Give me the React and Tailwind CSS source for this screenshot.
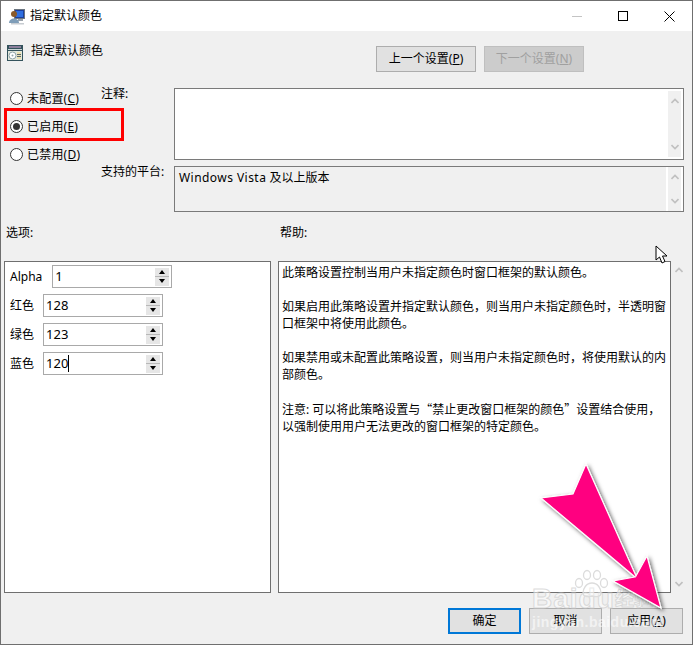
const FONT = { fontFamily: '"Noto Sans", "Noto Sans CJK SC", sans-serif' };

const Underlined = ({ label, k }) => (
  <>
    {label}(<span className="underline">{k}</span>)
  </>
);

const Radio = ({ checked, children }) => (
  <div className="flex items-center h-[28px] pl-[9px] gap-[4px]">
    <span className="w-[13px] h-[13px] rounded-full border border-[#333] bg-white flex items-center justify-center">
      {checked && <span className="w-[7px] h-[7px] rounded-full bg-[#333]" />}
    </span>
    <span className="leading-none pt-px tracking-[0.2px]">{children}</span>
  </div>
);

const Chevron = ({ up }) => (
  <svg width="8" height="6" viewBox="0 0 8 6">
    <path d={up ? "M0.5 5 L4 1.5 L7.5 5" : "M0.5 1 L4 4.5 L7.5 1"} fill="none" stroke="#c0c0c0" strokeWidth="1.6" />
  </svg>
);

const ScrollCol = ({ framed }) => (
  <div className={`w-[17px] flex flex-col items-center justify-between py-[7px] ${framed ? "bg-[#f0f0f0] border-x-2 border-white" : "bg-[#f0f0f0] border-2 border-white"}`}>
    <Chevron up />
    <Chevron />
  </div>
);

const Spin = ({ value, caret }) => (
  <div className="w-[120px] h-[23px] border border-[#a9a9a9] bg-white flex items-center">
    <span className="pl-[2px] flex-1 text-[13px] leading-none flex items-center">
      {value}
      {caret && <span className="w-px h-[17px] bg-black" />}
    </span>
    <div className="w-[14px] h-[18px] mr-[2px] flex flex-col gap-[1px] bg-[#b8b8b8]">
      <div className="flex-1 bg-[#e6e6e6] flex items-center justify-center">
        <span className="w-0 h-0 border-x-[3px] border-x-transparent border-b-[4px] border-b-black" />
      </div>
      <div className="flex-1 bg-[#e6e6e6] flex items-center justify-center">
        <span className="w-0 h-0 border-x-[3px] border-x-transparent border-t-[4px] border-t-black" />
      </div>
    </div>
  </div>
);

const SpinRow = ({ label, gap, ...rest }) => (
  <div className={`flex items-center h-[29px] ${gap}`}>
    <span className="leading-none">{label}</span>
    <Spin {...rest} />
  </div>
);

const Btn = ({ children, className = "" }) => (
  <div className={`flex items-center justify-center ${className}`}>{children}</div>
);

const WindowIcon = () => (
  <svg width="16" height="17" viewBox="0 0 16 17">
    <rect x="5.5" y="1.5" width="10" height="9" fill="#1d3f9c" stroke="#6b7580" />
    <rect x="7" y="3" width="7" height="6" fill="#2f6fe0" />
    <rect x="9" y="11" width="5" height="2" fill="#9aa2ab" />
    <circle cx="5" cy="6" r="3" fill="#8a5a2a" />
    <path d="M0 15 C0 9 10 9 10 15 Z" fill="#7f9db8" />
    <rect x="2" y="15" width="13" height="1.5" fill="#c7ccd1" />
  </svg>
);

const PolicyIcon = () => (
  <svg width="16" height="16" viewBox="0 0 16 16">
    <rect x="0" y="0" width="16" height="16" fill="#34535c" />
    <rect x="2" y="1" width="12" height="2" fill="#8b7f9c" />
    <rect x="1" y="4" width="14" height="1" fill="#c9d4d6" />
    <rect x="1" y="6" width="14" height="9" fill="#e3e7dc" />
    <circle cx="5.5" cy="10.5" r="3.5" fill="#fff" stroke="#8fa3a8" />
    <circle cx="5.5" cy="10.5" r="1" fill="#8fa3a8" />
    <rect x="10" y="7" width="4" height="7" fill="#e9dfb0" />
    <rect x="10" y="9" width="4" height="1" fill="#57666b" />
    <rect x="10" y="11" width="4" height="1" fill="#57666b" />
  </svg>
);

export default function App() {
  return (
    <div className="relative w-[694px] h-[645px] bg-white overflow-hidden text-[12px] text-black" style={FONT}>
      <div className="w-[693px] h-[645px] border border-[#6f6f6f] flex flex-col bg-[#f0f0f0]">
        {/* title bar */}
        <div className="h-[30px] bg-white flex items-center shrink-0">
          <div className="pl-[8px] pr-[5px] flex">
            <WindowIcon />
          </div>
          <span>指定默认颜色</span>
          <div className="ml-auto flex items-center">
            <div className="w-[46px] flex justify-center">
              <span className="w-[10px] h-px bg-[#c4c4c4]" />
            </div>
            <div className="w-[46px] flex justify-center">
              <span className="w-[10px] h-[10px] border border-black" />
            </div>
            <div className="w-[46px] flex justify-center">
              <svg width="11" height="11" viewBox="0 0 11 11">
                <path d="M0.5 0.5 L10.5 10.5 M10.5 0.5 L0.5 10.5" stroke="#000" strokeWidth="1" />
              </svg>
            </div>
          </div>
        </div>

        {/* policy name + prev/next */}
        <div className="h-[41px] pt-[15px] flex items-start shrink-0">
          <div className="pl-[6px] pr-[8px] flex mt-[-1px]">
            <PolicyIcon />
          </div>
          <span className="leading-none mt-[-1px]">指定默认颜色</span>
          <div className="ml-auto mr-[108px] flex gap-[8px]">
            <Btn className="w-[100px] h-[26px] border border-[#adadad] bg-[#e1e1e1]">
              <Underlined label="上一个设置" k="P" />
            </Btn>
            <Btn className="w-[100px] h-[26px] border border-[#bfbfbf] bg-[#cccccc] text-[#a0a0a0]">
              <Underlined label="下一个设置" k="N" />
            </Btn>
          </div>
        </div>

        {/* state + comment + platform */}
        <div className="flex shrink-0 mt-[16px]">
          <div className="w-[100px] flex flex-col mt-[-4px] h-[124px]">
            <Radio>
              <Underlined label="未配置" k="C" />
            </Radio>
            <Radio checked>
              <Underlined label="已启用" k="E" />
            </Radio>
            <Radio>
              <Underlined label="已禁用" k="D" />
            </Radio>
          </div>
          <div className="w-[73px] flex flex-col">
            <span className="h-[77px] leading-[12px]">注释:</span>
            <span className="leading-[12px] mt-[1px]">支持的平台:</span>
          </div>
          <div className="w-[510px] flex flex-col gap-[6px]">
            <div className="h-[72px] border border-[#7a7a7a] bg-white flex justify-end">
              <ScrollCol />
            </div>
            <div className="h-[46px] border border-[#7a7a7a] flex justify-between">
              <span className="pl-[4px] pt-[2px]">
                <span className="tracking-[0.45px]">Windows Vista</span> 及以上版本
              </span>
              <ScrollCol framed />
            </div>
          </div>
        </div>

        {/* section labels */}
        <div className="flex shrink-0 mt-[12px] h-[37px]">
          <span className="w-[279px] pl-[5px]">选项:</span>
          <span>帮助:</span>
        </div>

        {/* options + help */}
        <div className="flex shrink-0 h-[332px]">
          <div className="ml-[3px] w-[267px] border border-[#6f6f6f] bg-white pl-[5px]">
            <SpinRow label="Alpha" gap="gap-[10px]" value="1" />
            <SpinRow label="红色" gap="gap-[9px]" value="128" />
            <SpinRow label="绿色" gap="gap-[9px]" value="123" />
            <SpinRow label="蓝色" gap="gap-[9px]" value="120" caret />
          </div>
          <div className="ml-[7px] w-[393px] border border-[#6f6f6f] bg-white pl-[3px] pr-[2px] pt-[2px] leading-[17px]">
            <p>此策略设置控制当用户未指定颜色时窗口框架的默认颜色。</p>
            <p className="mt-[17px]">如果启用此策略设置并指定默认颜色，则当用户未指定颜色时，半透明窗口框架中将使用此颜色。</p>
            <p className="mt-[17px]">如果禁用或未配置此策略设置，则当用户未指定颜色时，将使用默认的内部颜色。</p>
            <p className="mt-[17px]">
              注意: 可以将此策略设置与
              <span style={{ fontFamily: '"Noto Sans CJK SC", sans-serif' }}>“禁止更改窗口框架的颜色”</span>
              设置结合使用，以强制使用用户无法更改的窗口框架的特定颜色。
            </p>
          </div>
          <div className="w-[15px] flex flex-col items-center justify-between py-[6px]">
            <Chevron up />
            <Chevron />
          </div>
        </div>

        {/* footer */}
        <div className="flex justify-end gap-[8px] mr-[9px] mt-[15px]">
          <Btn className="w-[73px] h-[26px] border-2 border-[#0078d7] bg-[#e1e1e1]">确定</Btn>
          <Btn className="w-[73px] h-[26px] border border-[#adadad] bg-[#e1e1e1]">取消</Btn>
          <Btn className="w-[73px] h-[26px] border border-[#adadad] bg-[#e1e1e1]">
            <Underlined label="应用" k="A" />
          </Btn>
        </div>
      </div>

      {/* red highlight box added on top of the screenshot */}
      <div className="absolute left-[4px] top-[108px] w-[120px] h-[33px] border-[3px] border-[#ff0000]" />

      {/* mouse pointer */}
      <svg className="absolute left-[655px] top-[245px]" width="14" height="21" viewBox="0 0 14 21">
        <path d="M1 1 L1 15 L4.5 12 L7 18 L10 16.5 L7.5 11 L12 11 Z" fill="#fff" stroke="#000" />
      </svg>

      {/* watermark */}
      <div
        className="absolute left-[532px] top-[585px] text-white/50 font-bold text-[28px] leading-none tracking-[1px] [-webkit-text-stroke:1px_rgba(205,205,205,0.7)]"
        style={{ fontFamily: '"Liberation Sans", sans-serif' }}
      >
        Baidu
      </div>
      <div className="absolute left-[615px] top-[590px] text-white/50 font-bold text-[19px] leading-none [-webkit-text-stroke:1px_rgba(205,205,205,0.7)]">
        经验
      </div>
      <div
        className="absolute left-[532px] top-[615px] text-white/60 text-[14px] leading-none font-bold tracking-[0.5px]"
        style={{ fontFamily: '"Liberation Sans", sans-serif' }}
      >
        jingyan.baidu.com
      </div>
      <svg className="absolute left-[574px] top-[569px]" width="36" height="30" viewBox="0 0 36 30">
        <g fill="#fff" fillOpacity="0.4" stroke="#dcdcdc" strokeWidth="1.3">
          <ellipse cx="5" cy="14" rx="3.5" ry="4.5" />
          <ellipse cx="13" cy="6" rx="3.5" ry="4.5" />
          <ellipse cx="23" cy="6" rx="3.5" ry="4.5" />
          <ellipse cx="30" cy="14" rx="3.5" ry="4.5" />
          <path d="M18 14 C12 14 9 20 9 24 C9 28 14 28 18 27 C22 28 27 28 27 24 C27 20 24 14 18 14 Z" />
        </g>
      </svg>

      {/* pink arrow annotation */}
      <svg className="absolute left-[530px] top-[455px]" width="150" height="165" viewBox="530 455 150 165">
        <defs>
          <filter id="arrowShadow" x="-20%" y="-20%" width="140%" height="140%">
            <feDropShadow dx="2" dy="2" stdDeviation="2" floodColor="#000" floodOpacity="0.6" />
          </filter>
        </defs>
        <polygon
          points="586,464 636,576 647,556 661,608 613,581 635,577 541,498 573,494"
          fill="#ff0080"
          stroke="#fff"
          strokeWidth="1.2"
          filter="url(#arrowShadow)"
        />
      </svg>
    </div>
  );
}
